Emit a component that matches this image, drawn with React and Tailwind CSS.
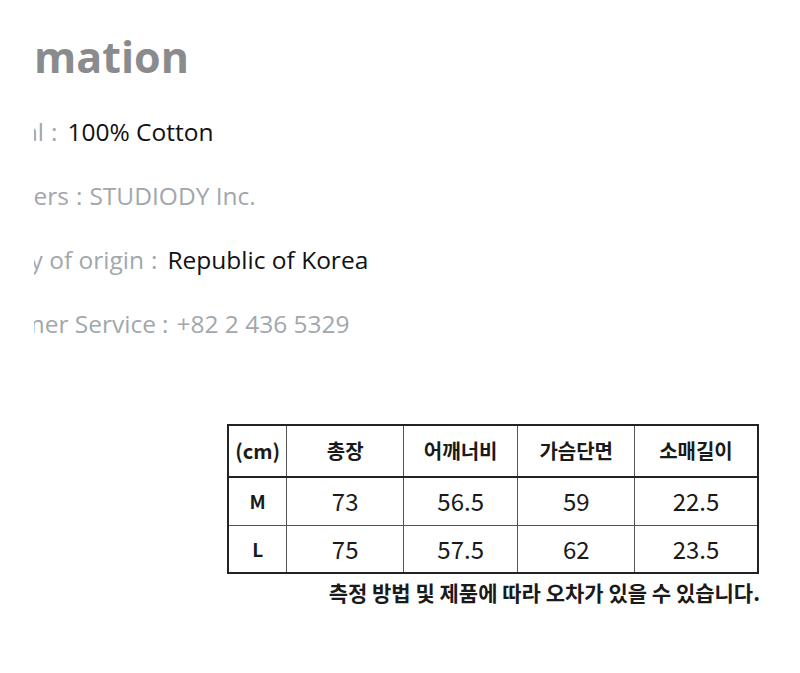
import React from 'react'

const cjk = { fontFamily: '"Noto Sans CJK KR", "Noto Sans", sans-serif' }
const latin = { fontFamily: '"Open Sans", "Noto Sans", sans-serif' }

// label box ends where the visible part of the label ends; the rest runs under the left clip
const info = [
  { label: 'Material', value: '100% Cotton', dark: true, w: 'w-[10px]', gapA: 'ml-[7px]', gapB: 'ml-[10px]' },
  { label: 'Manufacturers', value: 'STUDIODY Inc.', dark: false, w: 'w-[35px]', gapA: 'ml-[7px]', gapB: 'ml-[7px]' },
  { label: 'Country of origin', value: 'Republic of Korea', dark: true, w: 'w-[110px]', gapA: 'ml-[7px]', gapB: 'ml-[10px]' },
  { label: 'Customer Service', value: '+82 2 436 5329', dark: false, w: 'w-[122px]', gapA: 'ml-[6px]', gapB: 'ml-[8px]' },
]

const sizes = [
  { size: 'M', values: ['73', '56.5', '59', '22.5'] },
  { size: 'L', values: ['75', '57.5', '62', '23.5'] },
]

const heads = ['(cm)', '총장', '어깨너비', '가슴단면', '소매길이']

export default function App() {
  return (
    <div className="w-[800px] h-[673px] bg-white overflow-hidden" style={cjk}>
      {/* Product information, the left part is cropped away */}
      <div className="ml-[34px] pt-[25px] overflow-hidden" style={latin}>
        <div className="w-[155px] flex justify-end">
          <h2 className="shrink-0 whitespace-nowrap text-[43px] leading-[64px] font-bold text-[#8a8b8d]">
            Information
          </h2>
        </div>
        <div className="mt-[11px]">
          {info.map((row) => (
            <div
              key={row.label}
              className="flex items-baseline whitespace-nowrap text-[24.5px] leading-[64px] text-[#a2a7ac]"
            >
              <div className={`${row.w} shrink-0 flex justify-end`}>
                <span className="shrink-0">{row.label}</span>
              </div>
              <span className={row.gapA}>:</span>
              <span className={`${row.gapB} ${row.dark ? 'text-[#111]' : ''}`}>{row.value}</span>
            </div>
          ))}
        </div>
      </div>

      {/* Size table */}
      <div className="ml-[227px] mt-[68px] w-[532px]">
        <table className="w-full border-collapse border-2 border-[#222] text-[#1a1a1a]">
          <colgroup>
            <col className="w-[59px]" />
            <col className="w-[117px]" />
            <col className="w-[115px]" />
            <col className="w-[117px]" />
            <col className="w-[124px]" />
          </colgroup>
          <thead>
            <tr className="h-[52px] border-b-2 border-[#222]">
              {heads.map((h) => (
                <th
                  key={h}
                  className="border-r border-[#555] last:border-r-0 text-[20px] font-bold text-center"
                >
                  {h}
                </th>
              ))}
            </tr>
          </thead>
          <tbody>
            {sizes.map((r, i) => (
              <tr
                key={r.size}
                className={`h-[48px] ${i === 0 ? 'border-b border-[#555]' : ''}`}
              >
                <td className="border-r border-[#555] text-[19px] font-bold text-center">
                  {r.size}
                </td>
                {r.values.map((v, j) => (
                  <td
                    key={j}
                    className="border-r border-[#555] last:border-r-0 text-[24px] text-center"
                  >
                    {v}
                  </td>
                ))}
              </tr>
            ))}
          </tbody>
        </table>
        <p className="mt-[4px] -mr-[1px] text-right text-[21px] leading-[28px] font-bold text-[#1a1a1a]">
          측정 방법 및 제품에 따라 오차가 있을 수 있습니다.
        </p>
      </div>
    </div>
  )
}
